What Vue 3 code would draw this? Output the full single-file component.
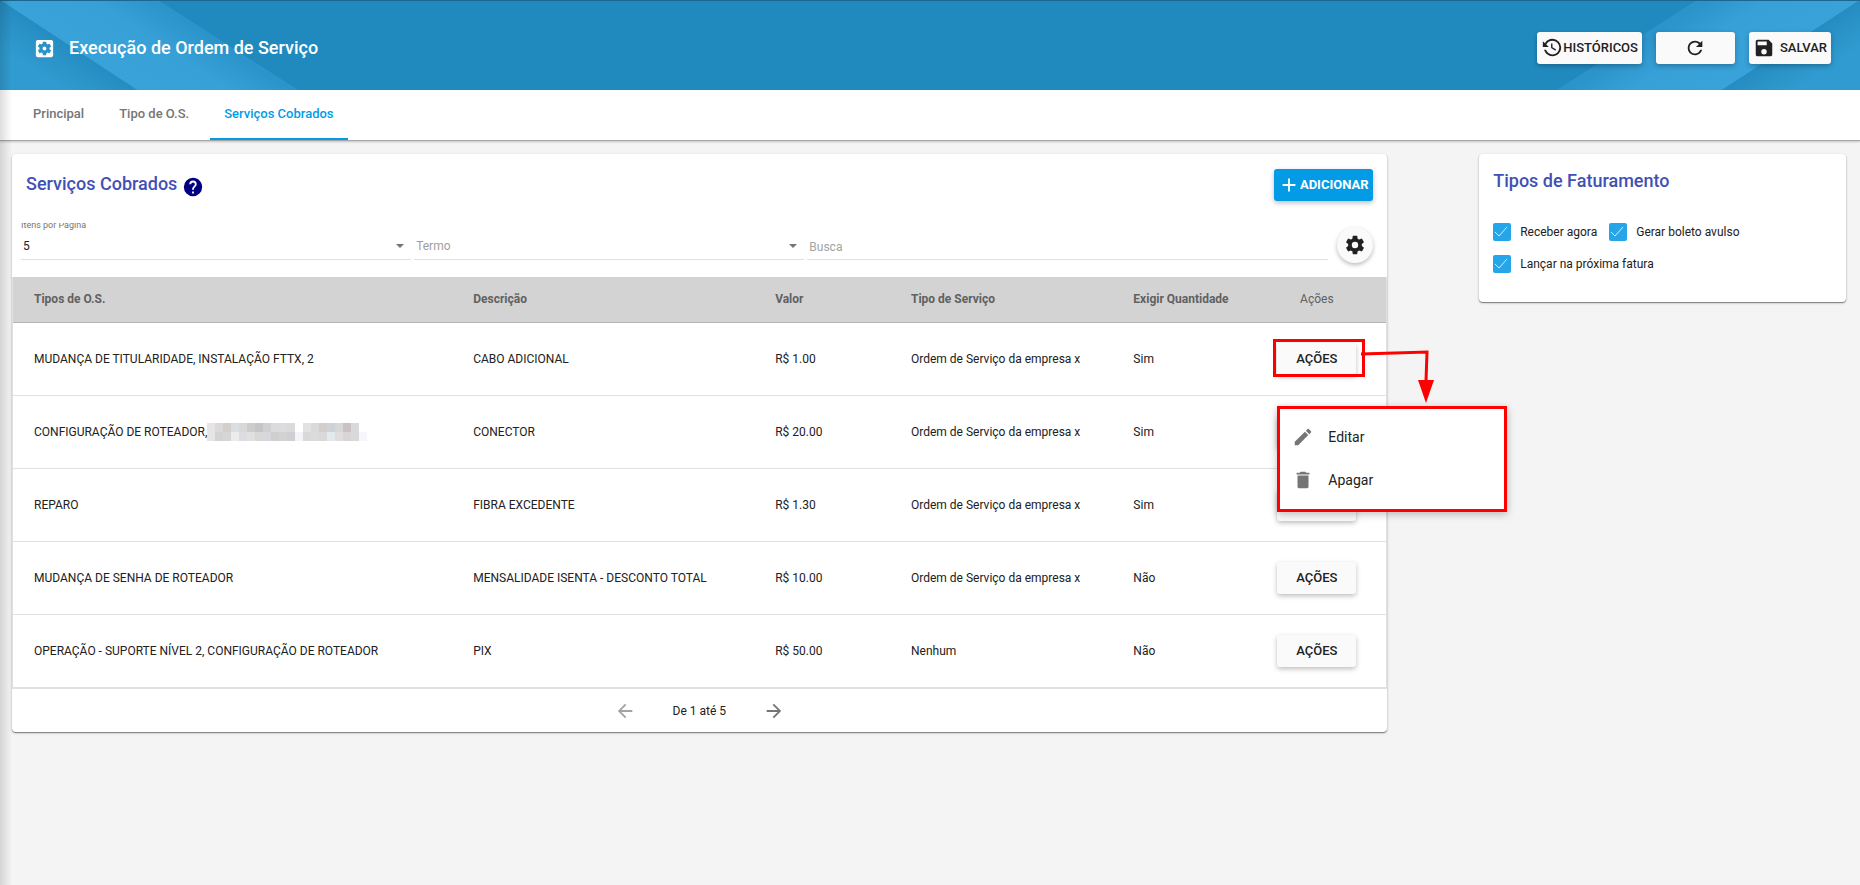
<script setup>
import { ref } from 'vue'

const icons = {
  settingsBox:
    'M12 10c-1.1 0-2 .9-2 2s.9 2 2 2 2-.9 2-2-.9-2-2-2zm7-7H5c-1.11 0-2 .9-2 2v14c0 1.1.89 2 2 2h14c1.11 0 2-.9 2-2V5c0-1.1-.89-2-2-2zm-1.75 9c0 .23-.02.46-.05.68l1.48 1.16c.13.11.17.3.08.45l-1.4 2.42c-.09.15-.27.21-.43.15l-1.74-.7c-.36.28-.76.51-1.18.69l-.26 1.85c-.03.17-.18.3-.35.3h-2.8c-.17 0-.32-.13-.35-.29l-.26-1.85c-.43-.18-.82-.41-1.18-.69l-1.74.7c-.16.06-.34 0-.43-.15l-1.4-2.42c-.09-.15-.05-.34.08-.45l1.48-1.16c-.03-.23-.05-.46-.05-.69 0-.23.02-.46.05-.68l-1.48-1.16c-.13-.11-.17-.3-.08-.45l1.4-2.42c.09-.15.27-.21.43-.15l1.74.7c.36-.28.76-.51 1.18-.69l.26-1.85c.03-.17.18-.3.35-.3h2.8c.17 0 .32.13.35.29l.26 1.85c.43.18.82.41 1.18.69l1.74-.7c.16-.06.34 0 .43.15l1.4 2.42c.09.15.05.34-.08.45l-1.48 1.16c.03.23.05.46.05.69z',
  history:
    'M11,7V12.11L15.71,14.9L16.5,13.62L12.5,11.25V7M12.5,2C8.97,2 5.91,3.92 4.27,6.77L2,4.5V11H8.5L5.75,8.25C6.96,5.73 9.5,4 12.5,4A7.5,7.5 0 0,1 20,11.5A7.5,7.5 0 0,1 12.5,19C9.23,19 6.47,16.91 5.44,14H3.34C4.44,18.03 8.11,21 12.5,21C17.74,21 22,16.75 22,11.5A9.5,9.5 0 0,0 12.5,2Z',
  refresh:
    'M17.65,6.35C16.2,4.9 14.21,4 12,4A8,8 0 0,0 4,12A8,8 0 0,0 12,20C15.73,20 18.84,17.45 19.73,14H17.65C16.83,16.33 14.61,18 12,18A6,6 0 0,1 6,12A6,6 0 0,1 12,6C13.66,6 15.14,6.69 16.22,7.78L13,11H20V4L17.65,6.35Z',
  save: 'M15,9H5V5H15M12,19A3,3 0 0,1 9,16A3,3 0 0,1 12,13A3,3 0 0,1 15,16A3,3 0 0,1 12,19M17,3H5C3.89,3 3,3.9 3,5V19A2,2 0 0,0 5,21H19A2,2 0 0,0 21,19V7L17,3Z',
  plus: 'M19,13H13V19H11V13H5V11H11V5H13V11H19V13Z',
  cog: 'M12,15.5A3.5,3.5 0 0,1 8.5,12A3.5,3.5 0 0,1 12,8.5A3.5,3.5 0 0,1 15.5,12A3.5,3.5 0 0,1 12,15.5M19.43,12.97C19.47,12.65 19.5,12.33 19.5,12C19.5,11.67 19.47,11.34 19.43,11L21.54,9.37C21.73,9.22 21.78,8.95 21.66,8.73L19.66,5.27C19.54,5.05 19.27,4.96 19.05,5.05L16.56,6.05C16.04,5.66 15.5,5.32 14.87,5.07L14.5,2.42C14.46,2.18 14.25,2 14,2H10C9.75,2 9.54,2.18 9.5,2.42L9.13,5.07C8.5,5.32 7.96,5.66 7.44,6.05L4.95,5.05C4.73,4.96 4.46,5.05 4.34,5.27L2.34,8.73C2.21,8.95 2.27,9.22 2.46,9.37L4.57,11C4.53,11.34 4.5,11.67 4.5,12C4.5,12.33 4.53,12.65 4.57,12.97L2.46,14.63C2.27,14.78 2.21,15.05 2.34,15.27L4.34,18.73C4.46,18.95 4.73,19.03 4.95,18.95L7.44,17.94C7.96,18.34 8.5,18.68 9.13,18.93L9.5,21.58C9.54,21.82 9.75,22 10,22H14C14.25,22 14.46,21.82 14.5,21.58L14.87,18.93C15.5,18.67 16.04,18.34 16.56,17.94L19.05,18.95C19.27,19.03 19.54,18.95 19.66,18.73L21.66,15.27C21.78,15.05 21.73,14.78 21.54,14.63L19.43,12.97Z',
  help: 'M15.07,11.25L14.17,12.17C13.45,12.89 13,13.5 13,15H11V14.5C11,13.39 11.45,12.39 12.17,11.67L13.41,10.41C13.78,10.05 14,9.55 14,9C14,7.89 13.1,7 12,7A2,2 0 0,0 10,9H8A4,4 0 0,1 12,5A4,4 0 0,1 16,9C16,9.88 15.64,10.67 15.07,11.25M13,19H11V17H13M12,2A10,10 0 0,0 2,12A10,10 0 0,0 12,22A10,10 0 0,0 22,12C22,6.47 17.5,2 12,2Z',
  pencil:
    'M20.71,7.04C21.1,6.65 21.1,6 20.71,5.63L18.37,3.29C18,2.9 17.35,2.9 16.96,3.29L15.12,5.12L18.87,8.87M3,17.25V21H6.75L17.81,9.93L14.06,6.18L3,17.25Z',
  trash: 'M19,4H15.5L14.5,3H9.5L8.5,4H5V6H19M6,19A2,2 0 0,0 8,21H16A2,2 0 0,0 18,19V7H6V19Z',
  arrowLeft: 'M20,11V13H8L13.5,18.5L12.08,19.92L4.16,12L12.08,4.08L13.5,5.5L8,11H20Z',
  arrowRight: 'M4,11V13H16L10.5,18.5L11.92,19.92L19.84,12L11.92,4.08L10.5,5.5L16,11H4Z',
}

const tabs = ['Principal', 'Tipo de O.S.', 'Serviços Cobrados']
const activeTab = ref('Serviços Cobrados')

const perPage = ref('5')
const term = ref('')
const search = ref('')
const openRow = ref(0)

const rows = ref([
  { types: 'MUDANÇA DE TITULARIDADE, INSTALAÇÃO FTTX, 2', description: 'CABO ADICIONAL', value: 'R$ 1.00', service: 'Ordem de Serviço da empresa x', quantity: 'Sim' },
  { types: 'CONFIGURAÇÃO DE ROTEADOR,', hidden: true, description: 'CONECTOR', value: 'R$ 20.00', service: 'Ordem de Serviço da empresa x', quantity: 'Sim' },
  { types: 'REPARO', description: 'FIBRA EXCEDENTE', value: 'R$ 1.30', service: 'Ordem de Serviço da empresa x', quantity: 'Sim' },
  { types: 'MUDANÇA DE SENHA DE ROTEADOR', description: 'MENSALIDADE ISENTA - DESCONTO TOTAL', value: 'R$ 10.00', service: 'Ordem de Serviço da empresa x', quantity: 'Não' },
  { types: 'OPERAÇÃO - SUPORTE NÍVEL 2, CONFIGURAÇÃO DE ROTEADOR', description: 'PIX', value: 'R$ 50.00', service: 'Nenhum', quantity: 'Não' },
])

const billing = ref([
  { id: 'now', label: 'Receber agora', checked: true },
  { id: 'slip', label: 'Gerar boleto avulso', checked: true },
  { id: 'next', label: 'Lançar na próxima fatura', checked: true },
])

// pixelated cover for the hidden service names
const mosaic = [
  ['#e8e4e3', '#dadada', '#d3cfcf', '#dcdde0', '#d9d8d8', '#cdcbcc', '#c5c4c6', '#d0d0d2', '#d9dbdf', '#dcdcdd', '#dadadc', '#ffffff', '#e3e1e1', '#dad9dc', '#d2cecd', '#cfd3d8', '#d7d7da', '#c8c3c2', '#d8d8dd', '#ffffff'],
  ['#e7e4e4', '#d3d3d3', '#d6d6d5', '#ececec', '#dcdde0', '#e0e0e0', '#d8d7d7', '#d6d8db', '#d0cfcf', '#d3d3d6', '#cfcfd1', '#f3f4f7', '#dad8d8', '#dcdbdb', '#d9d9dc', '#e4e9ed', '#e1dddd', '#d7d5d5', '#d9d9dc', '#f6f7fc'],
]
</script>

<template>
  <div class="page">
    <header class="topbar">
      <svg class="ribbon ribbon-left" width="300" height="90" viewBox="0 0 300 90" aria-hidden="true">
        <defs>
          <linearGradient id="band" gradientUnits="userSpaceOnUse" x1="70" y1="45" x2="115" y2="-24">
            <stop offset="0" stop-color="#38a2d9" />
            <stop offset="0.6" stop-color="#37a0d7" />
            <stop offset="1" stop-color="#2b94ca" />
          </linearGradient>
          <linearGradient id="corner" gradientUnits="userSpaceOnUse" x1="70" y1="45" x2="48" y2="79">
            <stop offset="0" stop-color="#258cc1" />
            <stop offset="1" stop-color="#309bd0" />
          </linearGradient>
        </defs>
        <path d="M0 0H158L298 90H137Z" fill="url(#band)" />
        <path d="M0 0L137 90H0Z" fill="url(#corner)" />
      </svg>
      <svg class="ribbon ribbon-right" width="303" height="90" viewBox="0 0 303 90" aria-hidden="true">
        <g transform="translate(303) scale(-1 1)">
          <path d="M0 0H163L303 90H138Z" fill="url(#band)" />
          <path d="M0 0L138 90H0Z" fill="url(#corner)" />
        </g>
      </svg>
      <div class="topbar-title">
        <svg class="icon title-icon" viewBox="0 0 24 24"><path :d="icons.settingsBox" /></svg>
        <h1>Execução de Ordem de Serviço</h1>
      </div>
      <div class="topbar-actions">
        <button type="button" class="btn">
          <svg class="icon" viewBox="0 0 24 24"><path :d="icons.history" /></svg>HISTÓRICOS
        </button>
        <button type="button" class="btn btn-refresh" aria-label="Atualizar">
          <svg class="icon" viewBox="0 0 24 24"><path :d="icons.refresh" /></svg>
        </button>
        <button type="button" class="btn btn-save">
          <svg class="icon" viewBox="0 0 24 24"><path :d="icons.save" /></svg>SALVAR
        </button>
      </div>
    </header>

    <nav class="tabs">
      <button
        v-for="tab in tabs"
        :key="tab"
        type="button"
        class="tab"
        :class="{ active: tab === activeTab }"
        @click="activeTab = tab"
      >
        {{ tab }}
      </button>
    </nav>

    <main class="content">
      <section class="card services">
        <div class="services-head">
          <h2>Serviços Cobrados</h2>
          <svg class="icon help" viewBox="0 0 24 24"><path :d="icons.help" /></svg>
          <button type="button" class="btn btn-primary">
            <svg class="icon" viewBox="0 0 24 24"><path :d="icons.plus" /></svg>ADICIONAR
          </button>
        </div>

        <div class="filters">
          <div class="field">
            <label for="per-page">Itens por Pagina</label>
            <select id="per-page" v-model="perPage">
              <option>5</option>
              <option>10</option>
              <option>20</option>
            </select>
            <span class="caret"></span>
          </div>
          <div class="field">
            <select id="term" v-model="term" class="empty" aria-label="Termo">
              <option value="">Termo</option>
              <option value="description">Descrição</option>
            </select>
            <span class="caret"></span>
          </div>
          <div class="field field-search">
            <input id="search" v-model="search" type="text" placeholder="Busca" aria-label="Busca" />
          </div>
          <button type="button" class="round" aria-label="Configurar">
            <svg class="icon" viewBox="0 0 24 24"><path :d="icons.cog" /></svg>
          </button>
        </div>

        <table class="grid">
          <colgroup>
            <col class="c-types" />
            <col class="c-desc" />
            <col class="c-value" />
            <col class="c-service" />
            <col class="c-qty" />
            <col class="c-actions" />
          </colgroup>
          <thead>
            <tr>
              <th>Tipos de O.S.</th>
              <th>Descrição</th>
              <th>Valor</th>
              <th>Tipo de Serviço</th>
              <th>Exigir Quantidade</th>
              <th class="actions">Ações</th>
            </tr>
          </thead>
          <tbody>
            <tr v-for="(row, i) in rows" :key="i">
              <td>
                <div class="types">
                  {{ row.types }}
                  <div v-if="row.hidden" class="mosaic">
                    <template v-for="(line, y) in mosaic" :key="y">
                      <i v-for="(color, x) in line" :key="x" :style="{ background: color }"></i>
                    </template>
                  </div>
                </div>
              </td>
              <td>{{ row.description }}</td>
              <td>{{ row.value }}</td>
              <td>{{ row.service }}</td>
              <td>{{ row.quantity }}</td>
              <td class="actions">
                <div class="action-wrap">
                  <button type="button" class="btn btn-row" @click="openRow = i">AÇÕES</button>
                  <template v-if="openRow === i">
                    <span class="marker"></span>
                    <svg class="pointer" width="76" height="54" viewBox="0 0 76 54" aria-hidden="true">
                      <path d="M1 5L67 3L66 32" fill="none" stroke="#f00" stroke-width="3" />
                      <path d="M58 31H74L66 54Z" fill="#f00" />
                    </svg>
                    <div class="menu">
                      <button type="button" class="menu-item">
                        <svg class="icon" viewBox="0 0 24 24"><path :d="icons.pencil" /></svg>Editar
                      </button>
                      <button type="button" class="menu-item">
                        <svg class="icon" viewBox="0 0 24 24"><path :d="icons.trash" /></svg>Apagar
                      </button>
                    </div>
                  </template>
                </div>
              </td>
            </tr>
          </tbody>
        </table>

        <footer class="pager">
          <button type="button" class="page-btn" disabled aria-label="Anterior">
            <svg class="icon" viewBox="0 0 24 24"><path :d="icons.arrowLeft" /></svg>
          </button>
          <span>De 1 até 5</span>
          <button type="button" class="page-btn" aria-label="Próxima">
            <svg class="icon" viewBox="0 0 24 24"><path :d="icons.arrowRight" /></svg>
          </button>
        </footer>
      </section>

      <aside class="card billing">
        <h2>Tipos de Faturamento</h2>
        <div class="checks">
          <label v-for="item in billing" :key="item.id" class="check" :for="item.id">
            <span class="box">
              <input :id="item.id" v-model="item.checked" type="checkbox" />
              <svg v-if="item.checked" viewBox="0 0 18 18"><path d="M2 9L6 13L14 4" /></svg>
            </span>
            {{ item.label }}
          </label>
        </div>
      </aside>
    </main>
  </div>
</template>

<style>
body {
  margin: 0;
  background: #f4f4f4;
}
</style>

<style scoped>
.page {
  position: relative;
  min-height: 100vh;
  font-family: Roboto, 'Liberation Sans', sans-serif;
  font-size: 12px;
  color: #212121;
}
.page::before {
  content: '';
  position: absolute;
  inset: 0 auto 0 0;
  width: 12px;
  background: linear-gradient(to right, rgba(0, 0, 0, 0.13), rgba(0, 0, 0, 0));
  z-index: 5;
  pointer-events: none;
}
* {
  box-sizing: border-box;
}
button,
input,
select {
  font: inherit;
  color: inherit;
}
h1,
h2 {
  margin: 0;
  font-size: 18px;
  font-weight: 500;
  line-height: 24px;
}
h2 {
  color: #3f51b5;
}
.icon {
  width: 22px;
  height: 22px;
  fill: currentColor;
  flex: none;
}
.topbar {
  position: relative;
  display: flex;
  align-items: center;
  justify-content: space-between;
  height: 90px;
  padding: 6px 29px 0 33px;
  background: #208abf;
}
.topbar::after {
  content: '';
  position: absolute;
  inset: 0 0 auto;
  height: 1px;
  background: #1c6790;
}
.ribbon {
  position: absolute;
  top: 0;
}
.ribbon-left {
  left: 0;
}
.ribbon-right {
  right: 0;
}
.topbar-title,
.topbar-actions {
  position: relative;
  display: flex;
  align-items: center;
}
.topbar-title {
  gap: 13px;
  color: #fff;
}
.title-icon {
  width: 23px;
  height: 23px;
}
.topbar-actions {
  gap: 14px;
}
.btn {
  display: flex;
  align-items: center;
  justify-content: center;
  height: 32px;
  padding: 0 4px 1px;
  border: 0;
  border-radius: 3px;
  background: #fafafa;
  color: #212121;
  font-size: 13px;
  font-weight: 500;
  white-space: nowrap;
  box-shadow: 0 2px 5px rgba(0, 0, 0, 0.26);
}
.btn-refresh {
  width: 79px;
}
.btn-save {
  gap: 5px;
}
.btn-primary {
  margin-left: auto;
  background: #039be5;
  color: #fff;
  font-weight: 700;
}
.tabs {
  display: flex;
  gap: 7px;
  height: 51px;
  padding-left: 19px;
  background: #fff;
  border-bottom: 1px solid #a6a6a6;
  box-shadow: 0 1px 2px rgba(0, 0, 0, 0.2);
}
.tab {
  padding: 0 14px 1px;
  border: 0;
  border-bottom: 2px solid transparent;
  background: none;
  color: #757575;
  font-size: 13px;
  font-weight: 500;
}
.tab.active {
  color: #039be5;
  border-color: #039be5;
}
.content {
  display: flex;
  align-items: flex-start;
  justify-content: space-between;
  padding: 13px 14px 24px 12px;
}
.card {
  background: #fff;
  border-radius: 4px;
  box-shadow: 0 1px 1px rgba(0, 0, 0, 0.4), 0 1px 3px rgba(0, 0, 0, 0.2);
}
.services {
  width: calc(75% - 1px);
}
.services-head {
  display: flex;
  align-items: center;
  padding: 15px 14px 0;
}
.services-head h2 {
  padding-bottom: 2px;
}
.help {
  margin: 4px 0 0 5px;
  color: #000080;
}
.filters {
  display: flex;
  align-items: flex-end;
  gap: 3px;
  padding: 22px 14px 14px 9px;
}
.field {
  position: relative;
  display: flex;
  flex: 3 1 0;
  flex-direction: column;
  justify-content: flex-end;
  height: 37px;
  margin-bottom: 3px;
  border-bottom: 1px solid #e0e0e0;
  overflow: hidden;
}
.field-search {
  flex-grow: 4;
}
.field label {
  height: 8px;
  font-size: 9px;
  line-height: 4px;
  color: #757575;
}
.field select,
.field input {
  width: 100%;
  height: 28px;
  padding: 2px 2px 0;
  border: 0;
  outline: 0;
  background: transparent;
  appearance: none;
}
.field input {
  padding-top: 4px;
}
.field select.empty {
  color: #9e9e9e;
}
.field input::placeholder {
  color: #a3a3a3;
  opacity: 1;
}
.caret {
  position: absolute;
  right: 7px;
  bottom: 11px;
  border: 4px solid transparent;
  border-top-color: #757575;
  border-bottom: 0;
}
.round {
  display: flex;
  align-items: center;
  justify-content: center;
  flex: none;
  width: 36px;
  height: 36px;
  margin-left: 6px;
  padding: 0;
  border: 0;
  border-radius: 50%;
  background: #fafafa;
  box-shadow: 0 2px 4px rgba(0, 0, 0, 0.26);
}
.grid {
  width: 100%;
  table-layout: fixed;
  border-collapse: separate;
  border-spacing: 0;
  border: 1px solid #e0e0e0;
  border-top: 0;
}
.c-types {
  width: 32%;
}
.c-desc {
  width: 22%;
}
.c-value {
  width: 9.9%;
}
.c-service {
  width: 16.2%;
}
.c-qty {
  width: 9.9%;
}
.c-actions {
  width: 10%;
}
th,
td {
  padding: 0 0 0 21px;
  text-align: left;
  white-space: nowrap;
}
th {
  height: 46px;
  padding-bottom: 2px;
  background: #d3d3d3;
  border-bottom: 1px solid #b5b5b5;
  color: #616161;
  font-weight: 700;
}
td {
  height: 73px;
  padding-bottom: 1px;
  border-bottom: 1px solid #e0e0e0;
}
th.actions {
  font-weight: 400;
}
.actions {
  padding-left: 0;
  text-align: center;
}
.types {
  display: flex;
  align-items: center;
}
.mosaic {
  display: grid;
  grid-template-columns: repeat(20, 8px);
  grid-auto-rows: 9px;
}
.action-wrap {
  position: relative;
  width: 79px;
  margin: 0 auto;
}
.btn-row {
  width: 79px;
  padding: 0;
}
.marker {
  position: absolute;
  top: -4px;
  left: -4px;
  width: 92px;
  height: 38px;
  border: 3px solid #f00;
}
.pointer {
  position: absolute;
  top: 6px;
  left: 83px;
  z-index: 2;
}
.menu {
  position: absolute;
  top: 63px;
  left: 0;
  z-index: 3;
  width: 230px;
  padding: 7px 0;
  border: 3px solid #f00;
  background: #fff;
  box-shadow: 0 2px 8px rgba(0, 0, 0, 0.26);
}
.menu-item {
  display: flex;
  align-items: center;
  gap: 14px;
  width: 100%;
  height: 43px;
  padding: 0 12px;
  border: 0;
  background: none;
  font-size: 14px;
}
.menu-item .icon {
  color: #757575;
}
.pager {
  display: flex;
  align-items: center;
  justify-content: center;
  gap: 37px;
  height: 43px;
}
.page-btn {
  display: flex;
  padding: 0;
  border: 0;
  background: none;
  color: #757575;
}
.page-btn:disabled {
  color: #a3a3a3;
}
.billing {
  width: 20%;
  padding: 15px 14px 29px;
}
.checks {
  display: flex;
  flex-wrap: wrap;
  gap: 14px 12px;
  padding-top: 30px;
}
.check {
  display: flex;
  align-items: center;
  gap: 9px;
  height: 18px;
}
.box {
  position: relative;
  width: 18px;
  height: 18px;
}
.box input {
  appearance: none;
  display: block;
  width: 18px;
  height: 18px;
  margin: 0;
  border: 2px solid #757575;
  border-radius: 2px;
}
.box input:checked {
  border: 0;
  background: #26a6e9;
}
.box svg {
  position: absolute;
  inset: 0;
  fill: none;
  stroke: #d6eefb;
  stroke-width: 1;
  pointer-events: none;
}
</style>
